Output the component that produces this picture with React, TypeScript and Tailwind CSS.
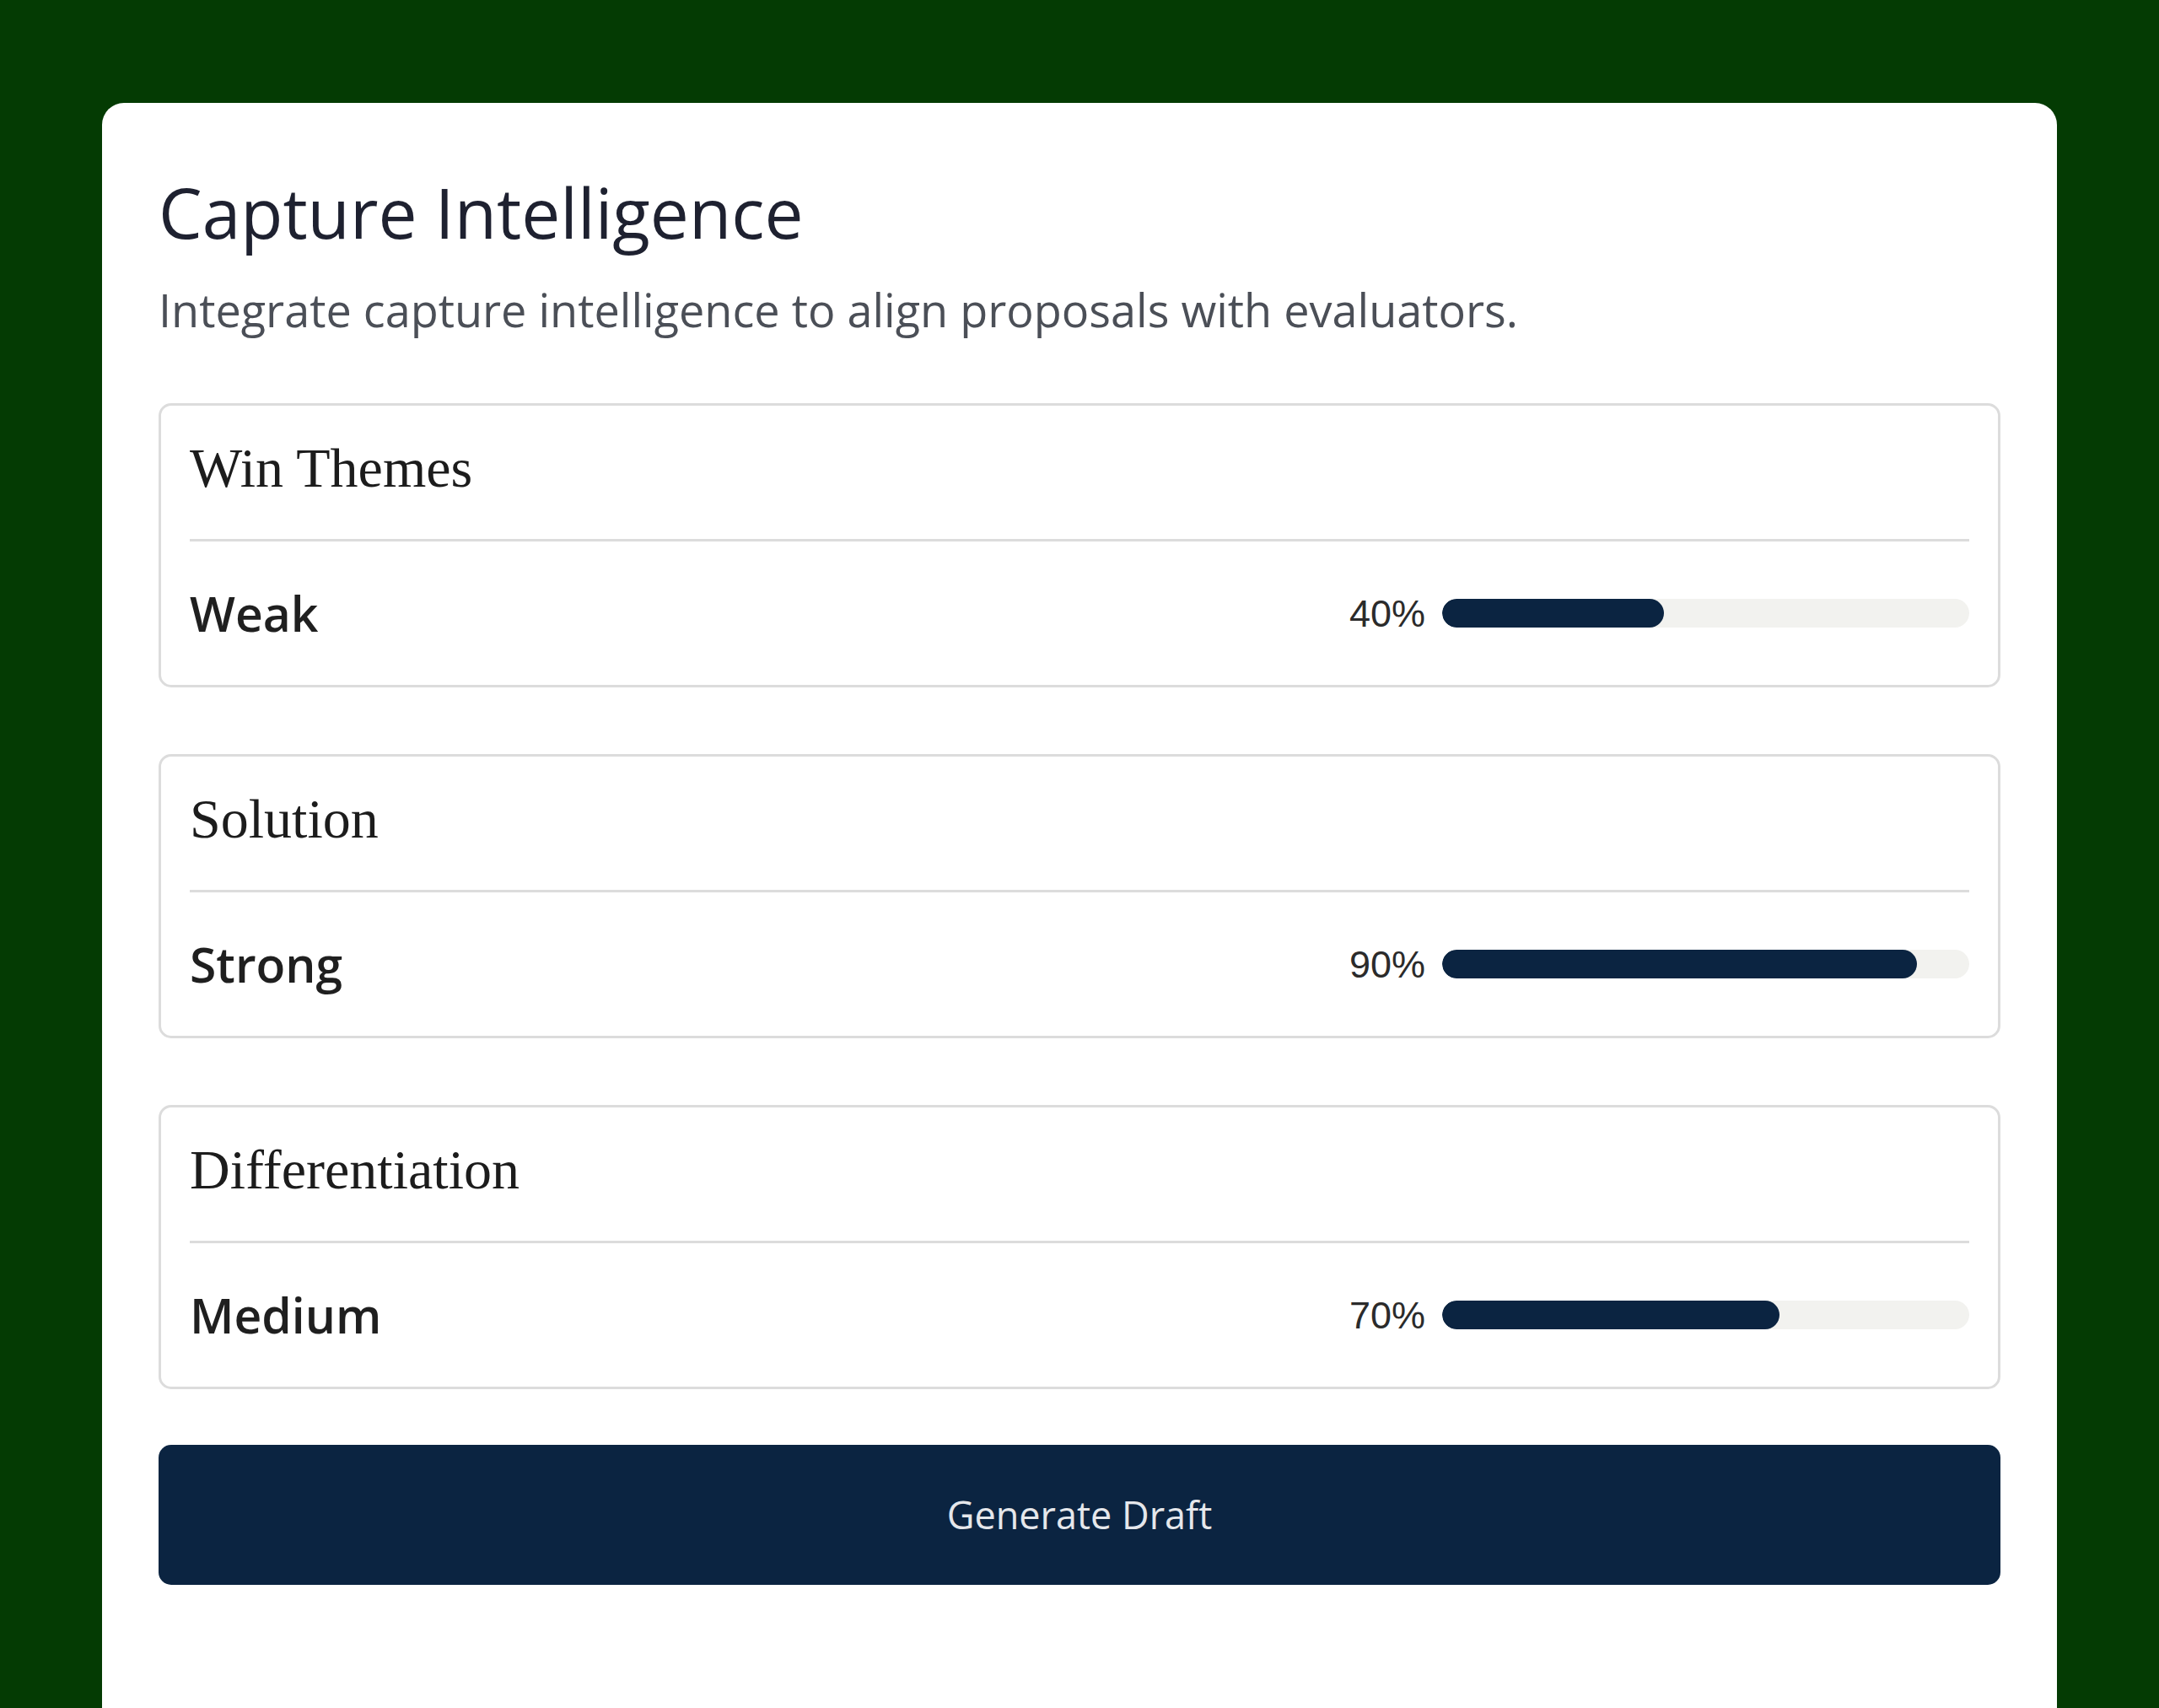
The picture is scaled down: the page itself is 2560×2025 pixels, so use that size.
const sections = [
  { title: "Win Themes", rating: "Weak", percent: 40, fill: 42 },
  { title: "Solution", rating: "Strong", percent: 90, fill: 90 },
  { title: "Differentiation", rating: "Medium", percent: 70, fill: 64 }
];

function ScoreBar({ percent, fill }: { percent: number; fill: number }) {
  return (
    <div className="flex items-center gap-[20px]">
      <span className="font-['Liberation_Sans',Arial,sans-serif] text-[45px] leading-none text-[#2b2b2b]">
        {percent}%
      </span>
      <div className="h-[34px] w-[625px] overflow-hidden rounded-full bg-[#f2f2ef]">
        <div className="h-full rounded-full bg-[#0b2441]" style={{ width: `${fill}%` }} />
      </div>
    </div>
  );
}

function SectionCard({ title, rating, percent, fill }: (typeof sections)[number]) {
  return (
    <div className="rounded-[15px] border-[3px] border-[#dcdcdc] bg-white px-[34px]">
      <div className="pt-[41px] pb-[51px]">
        <h2 className="font-['Liberation_Serif','Times_New_Roman',serif] text-[66px] leading-none font-normal text-[#1c1c1c]">
          {title}
        </h2>
      </div>
      <div className="h-[3px] bg-[#dcdcdc]" />
      <div className="flex h-[170px] items-center justify-between">
        <span className="text-[57px] leading-none font-semibold text-[#1f1f1f]">{rating}</span>
        <ScoreBar percent={percent} fill={fill} />
      </div>
    </div>
  );
}

export default function App() {
  return (
    <div className="h-[2025px] overflow-hidden bg-[#043b03] px-[121px] pt-[122px] font-['Open_Sans',sans-serif]">
      <div className="rounded-[26px] bg-white px-[67px] pt-[88px] pb-[200px]">
        <h1 className="text-[82px] leading-none font-medium text-[#1e2130]">Capture Intelligence</h1>
        <p className="mt-[48px] text-[54px] leading-none text-[#4b4f57]">
          Integrate capture intelligence to align proposals with evaluators.
        </p>

        <div className="mt-[84px] flex flex-col gap-[79px]">
          {sections.map((section) => (
            <SectionCard key={section.title} {...section} />
          ))}
        </div>

        <button
          type="button"
          className="mt-[66px] flex h-[166px] w-full items-center justify-center rounded-[15px] bg-[#0b2441] text-[45px] text-[#e5e7eb]"
        >
          Generate Draft
        </button>
      </div>
    </div>
  );
}
